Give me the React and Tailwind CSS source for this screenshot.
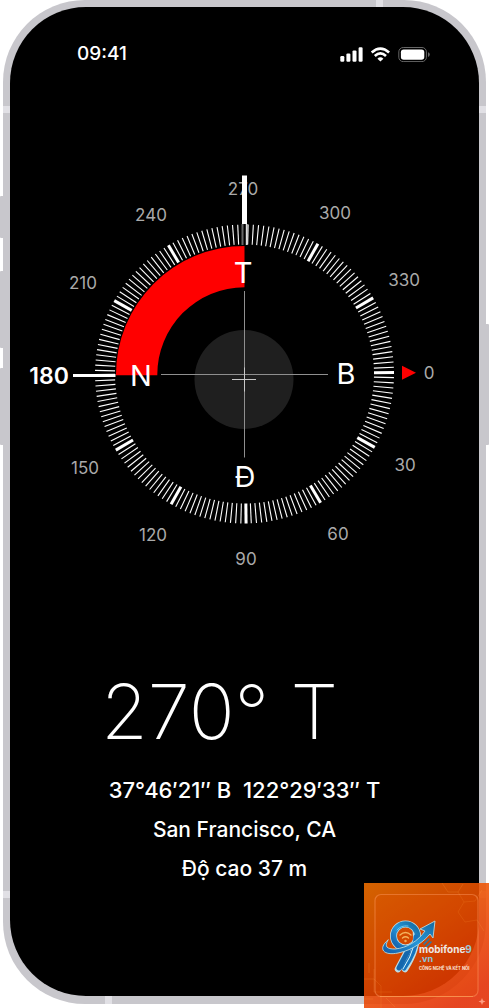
import React from "react";

const CX = 244.5;
const CY = 374;

const ticks = Array.from({ length: 180 }, (_, i) => i * 2).filter((a) => a !== 270);

const degreeLabels = [
  { value: "270", x: 243, y: 195 },
  { value: "300", x: 335, y: 219 },
  { value: "330", x: 404, y: 286 },
  { value: "0", x: 429, y: 379 },
  { value: "30", x: 405, y: 471 },
  { value: "60", x: 338, y: 540 },
  { value: "90", x: 246, y: 565 },
  { value: "120", x: 153, y: 541 },
  { value: "150", x: 85, y: 474 },
  { value: "210", x: 83, y: 289 },
  { value: "240", x: 151, y: 221 },
];

const directions = [
  { value: "T", x: 243, y: 283 },
  { value: "B", x: 346, y: 384 },
  { value: "Đ", x: 245, y: 487 },
  { value: "N", x: 141, y: 386 },
];

function StatusIcons() {
  return (
    <svg className="h-[15px] w-[90px]" viewBox="0 0 90 15" role="img" aria-label="Signal, Wi-Fi, battery">
      <g fill="#fff">
        <rect x="0.3" y="9" width="4" height="5.8" rx="1.2" />
        <rect x="6.4" y="6.4" width="4" height="8.4" rx="1.2" />
        <rect x="12.5" y="3.4" width="4" height="11.4" rx="1.2" />
        <rect x="18.6" y="0.3" width="4" height="14.5" rx="1.2" />
        <path d="M40.4 14.6 L37.4 11.7 Q40.4 9 43.4 11.7 Z" />
        <rect x="60.9" y="2.4" width="23.4" height="10.4" rx="2.8" />
      </g>
      <g fill="none" stroke="#fff" strokeWidth="2.7">
        <path d="M31.7 5.5 Q40.4 -2.3 49.1 5.5" />
        <path d="M34.8 8.9 Q40.4 3.9 46 8.9" />
      </g>
      <rect x="58.8" y="0.5" width="27.6" height="14.1" rx="4.4" fill="none" stroke="#666" />
      <path d="M88 5.2 Q89.8 5.7 89.8 7.6 Q89.8 9.5 88 10 Z" fill="#666" />
    </svg>
  );
}

function Compass() {
  return (
    <svg className="mt-24 block w-full" viewBox="10 160 469 420" role="group" aria-label="Compass">
      <g transform={`rotate(-0.6 ${CX} ${CY})`}>
        {ticks.map((a) => (
          <line
            key={a}
            x1={CX + 129.5}
            y1={CY}
            x2={CX + 149.5}
            y2={CY}
            stroke="#fff"
            strokeWidth={a % 30 === 0 ? 3 : 1.1}
            transform={`rotate(${a} ${CX} ${CY})`}
          />
        ))}
      </g>
      <path d="M242.5 224 V245" stroke="#666" strokeWidth="2" />
      <path d="M246.7 224 V245" stroke="#ddd" strokeWidth="1.8" />
      <circle cx="244" cy="379.5" r="49.5" fill="#1f1f1f" />
      <path d="M116 375.2 A128.5 128.5 0 0 1 244.5 246 V287.3 A87.3 87.3 0 0 0 157.3 375.2 Z" fill="#f00" />
      <path d="M161 374.5 H328 M244.5 291 V457.5" stroke="#8f8f8f" />
      <path d="M232 379.5 H256 M244.5 367.5 V391.5" stroke="#c8c8c8" />
      <g fill="#aaa" fontFamily="Inter, sans-serif" fontSize="17" textAnchor="middle">
        {degreeLabels.map((l) => (
          <text key={l.value} x={l.x} y={l.y}>
            {l.value}
          </text>
        ))}
      </g>
      <path d="M242 175.5 H247 V224 H242 Z" fill="#fff" />
      <path d="M73 375.6 H115.5" stroke="#fff" strokeWidth="3" />
      <path d="M402 365.7 L416 372.7 L402 379.7 Z" fill="#f00" />
      <text x="49" y="384" fill="#fff" fontFamily="Inter, sans-serif" fontSize="23" fontWeight="600" textAnchor="middle">
        180
      </text>
      <g fill="#fff" fontFamily="Inter, sans-serif" fontSize="29" textAnchor="middle">
        {directions.map((d) => (
          <text key={d.value} x={d.x} y={d.y}>
            {d.value}
          </text>
        ))}
      </g>
    </svg>
  );
}

function Watermark() {
  return (
    <svg
      className="absolute right-0 bottom-0 h-[125px] w-[125px]"
      viewBox="0 0 125 125"
      role="img"
      aria-label="mobifone9.vn"
      fontFamily="Inter, sans-serif"
    >
      <defs>
        <linearGradient id="bg" x1="0" y1="0" x2="0.7" y2="1">
          <stop offset="0" stopColor="#f47200" />
          <stop offset="0.5" stopColor="#ee5000" />
          <stop offset="1" stopColor="#e22a00" />
        </linearGradient>
        <linearGradient id="blue" x1="0" y1="1" x2="1" y2="0">
          <stop offset="0" stopColor="#125ba8" />
          <stop offset="0.5" stopColor="#2696d8" />
          <stop offset="1" stopColor="#16699e" />
        </linearGradient>
      </defs>
      <rect width="125" height="125" fill="url(#bg)" opacity="0.87" />
      <g fill="none" stroke="#ffa03c" strokeWidth="0.6" opacity="0.35">
        <path d="M78 0 L84 9 H94 L99 1 M94 9 L100 19 L111 18 L118 7 M100 19 L94 29 L101 39 L113 37 M113 37 L120 48" />
        <path d="M0 96 H10 L17 103 V125 M10 86 V109 H28 M0 116 H9 M22 115 L31 124 M5 80 V90" />
      </g>
      <rect x="11" y="11.5" width="103" height="102" rx="6" fill="#e04c00" fillOpacity="0.25" stroke="#ff9c61" strokeOpacity="0.45" strokeWidth="1.2" />
      <path d="M16 113.5 H109" stroke="#ffb05f" strokeWidth="1.2" opacity="0.5" />
      <g strokeLinejoin="round" strokeLinecap="round">
        <path d="M52 50 Q54 66 41 86 M44 67 L34 86" fill="none" stroke="#bcdde5" strokeWidth="6.5" />
        <circle cx="41.5" cy="53" r="12" fill="none" stroke="#bcdde5" strokeWidth="7" />
        <circle cx="41.5" cy="53" r="12" fill="none" stroke="url(#blue)" strokeWidth="5.4" />
        <path d="M52 54 Q52 68 40 85" fill="none" stroke="#1673bd" strokeWidth="5" />
        <path d="M44 68 L35 85" fill="none" stroke="#1466ad" strokeWidth="5" />
        <path d="M50 62 Q47 74 39 86" fill="none" stroke="#d9f4fa" strokeWidth="1" />
        <path d="M33 47 Q37 42 44 43" fill="none" stroke="#6bc8ee" strokeWidth="1" />
        <path
          d="M24 57 C13 66 20 73 34 70 C50 67 61 57 66 51 L69 55 L71 38 L56 46 L61 48 C54 58 43 65 31 66 C23 66 20 64 24 57 Z"
          fill="url(#blue)"
          stroke="#b8d8dc"
          strokeWidth="0.9"
        />
        <path d="M60 61 L65 56 M62 64 L67 59" stroke="#237cae" strokeWidth="1.5" />
      </g>
      <g fill="none" stroke="#f5b35d" strokeWidth="1.4" strokeLinecap="round">
        <path d="M36 52 Q41.5 47 47 52 M38.5 55 Q41.5 52.5 44.5 55" />
        <circle cx="41.5" cy="58" r="0.5" />
      </g>
      <text x="55" y="70" fontSize="10" fontWeight="700" fill="#eee9e5">
        mobifone<tspan fill="#9dc7d5">9</tspan>
      </text>
      <text x="55" y="79" fontSize="9" fontWeight="700" fill="#8cc5db">
        .vn
      </text>
      <text x="55" y="87" fontSize="4.2" fontWeight="700" fill="#fae6dc">
        CÔNG NGHỆ VÀ KẾT NỐI
      </text>
      <path d="M118 115 L119 117.5 L121.5 118.5 L119 119.5 L118 122 L117 119.5 L114.5 118.5 L117 117.5 Z" fill="#ff9e82" />
    </svg>
  );
}

function Band({ className }) {
  return <span className={`bg-[#e1e0e5] ${className}`} />;
}

export default function App() {
  return (
    <div className="relative flex bg-white pb-1 font-['Inter',sans-serif] text-white">
      <div className="flex w-[3px] shrink-0 flex-col pt-[196px]">
        <span className="h-[42px] rounded-l-[1px] bg-[#c8c7cc]" />
        <span className="mt-[33px] h-[77px] rounded-l-[1px] bg-[#c8c7cc]" />
        <span className="mt-5 h-[77px] rounded-l-[1px] bg-[#c8c7cc]" />
      </div>

      <div className="min-w-0 flex-1 overflow-hidden rounded-[82px] bg-[#c8c7cc]">
        <div className="flex h-[7px] justify-end pr-[103px]">
          <Band className="w-[7px]" />
        </div>
        <div className="flex">
          <div className="flex w-[7px] shrink-0 flex-col justify-between pt-[99px] pb-[98px]">
            <Band className="h-[7px]" />
            <Band className="h-[7px]" />
          </div>

          <main className="min-w-0 flex-1 rounded-[76px] bg-black pb-[108px]">
            <header className="flex items-center justify-between pt-[37px] pr-[49px] pl-[67px]">
              <time className="text-[19px] leading-5 font-medium">09:41</time>
              <StatusIcons />
            </header>

            <Compass />

            <section className="mt-[91px] text-center">
              <h1 className="pr-[50px] text-[76px] leading-[80px] font-extralight">270° T</h1>
              <div className="mt-5 leading-[39px] font-medium">
                <p className="text-[22px] whitespace-pre">37°46′21″ B  122°29′33″ T</p>
                <p className="text-[21px]">San Francisco, CA</p>
                <p className="text-[21px]">Độ cao 37 m</p>
              </div>
            </section>
          </main>

          <div className="flex w-[7px] shrink-0 flex-col justify-between pt-[99px] pb-[98px]">
            <Band className="h-[7px]" />
            <Band className="h-[7px]" />
          </div>
        </div>
        <div className="flex h-2 pl-[102px]">
          <Band className="w-[7px]" />
        </div>
      </div>

      <div className="flex w-[3px] shrink-0 flex-col pt-[324px]">
        <span className="h-[121px] rounded-r-[1px] bg-[#c8c7cc]" />
      </div>

      <Watermark />
    </div>
  );
}
